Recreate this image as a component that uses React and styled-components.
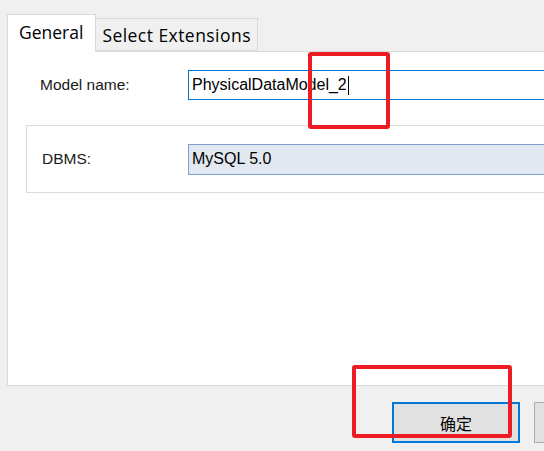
import styled, { createGlobalStyle } from 'styled-components';

const Global = createGlobalStyle`
  html,body{margin:0;padding:0;background:#f0f0f0;overflow:hidden;}
  body{width:544px;height:451px;}
`;

const Window = styled.div`
  position:relative;width:544px;height:451px;overflow:hidden;
  display:flex;flex-direction:column;padding:14px 0 0 7px;box-sizing:border-box;
`;

/* tabs */
const TabStrip = styled.div`
  display:flex;align-items:flex-end;height:37px;position:relative;z-index:1;
`;
const Tab = styled.div`
  box-sizing:border-box;display:flex;align-items:center;
  height:${p=>p.active?'38px':'33px'};
  margin-bottom:${p=>p.active?'-1px':'0'};
  padding:${p=>p.active?'0 12px 4px 11px':'1px 6px 0 6px'};
  background:${p=>p.active?'#fff':'#f0f0f0'};
  border:1px solid #d9d9d9;
  border-bottom:${p=>p.active?'none':'1px solid #d9d9d9'};
  ${p=>!p.active&&'border-left:none;letter-spacing:0.45px;'}
  font-family:"Open Sans","Noto Sans",sans-serif;font-size:17.5px;color:#000;
  white-space:nowrap;
`;

/* panel */
const Panel = styled.div`
  box-sizing:border-box;width:600px;height:335px;background:#fff;
  border:1px solid #d9d9d9;border-right:none;
  display:flex;flex-direction:column;
`;
const Row = styled.div`
  display:flex;align-items:center;
`;
const Label = styled.div`
  font-family:"Liberation Sans",Arial,sans-serif;font-size:15.5px;color:#1a1a1a;
  width:${p=>p.w}px;
`;
const Field = styled.div`
  box-sizing:border-box;flex:1;display:flex;align-items:center;
  height:${p=>p.h}px;padding-left:3px;
  background:${p=>p.readonly?'#e1e8f0':'#fff'};
  border:1px solid ${p=>p.readonly?'#7da2ce':'#0078d7'};
  border-right:none;
  font-family:"Liberation Sans",Arial,sans-serif;font-size:16px;color:#000;
`;
const Caret = styled.span`
  display:inline-block;width:1px;height:19px;background:#000;margin-left:1px;
`;
const NameRow = styled(Row)`
  margin:18px 0 0 32px;
`;
const Group = styled.div`
  box-sizing:border-box;margin:25px 0 0 18px;height:68px;
  border:1px solid #dcdcdc;border-right:none;
  display:flex;align-items:center;padding-left:15px;
`;

/* footer */
const Footer = styled.div`
  display:flex;gap:14px;padding:16px 0 0 385px;
`;
const Button = styled.div`
  box-sizing:border-box;flex:none;width:${p=>p.w}px;height:41px;
  display:flex;align-items:center;justify-content:center;
  background:#e1e1e1;
  border:${p=>p.primary?'2px solid #0078d7':'1px solid #adadad'};
  font-family:"Noto Sans CJK SC",sans-serif;font-size:16px;color:#000;
`;

/* red annotation boxes */
const Mark = styled.div`
  position:absolute;box-sizing:border-box;border:4px solid #ed1c24;border-radius:3px;
  left:${p=>p.x}px;top:${p=>p.y}px;width:${p=>p.w}px;height:${p=>p.h}px;
  z-index:5;
`;

export default function App(){
  return(
    <>
      <Global/>
      <Window>
        <TabStrip>
          <Tab active>General</Tab>
          <Tab>Select Extensions</Tab>
        </TabStrip>
        <Panel>
          <NameRow>
            <Label w={148}>Model name:</Label>
            <Field h={30}>PhysicalDataModel_2<Caret/></Field>
          </NameRow>
          <Group>
            <Label w={146}>DBMS:</Label>
            <Field h={31} readonly>MySQL 5.0</Field>
          </Group>
        </Panel>
        <Footer>
          <Button primary w={128}>确定</Button>
          <Button w={90}/>
        </Footer>
        <Mark x={308} y={52} w={82} h={77}/>
        <Mark x={352} y={365} w={160} h={73}/>
      </Window>
    </>
  );
}
